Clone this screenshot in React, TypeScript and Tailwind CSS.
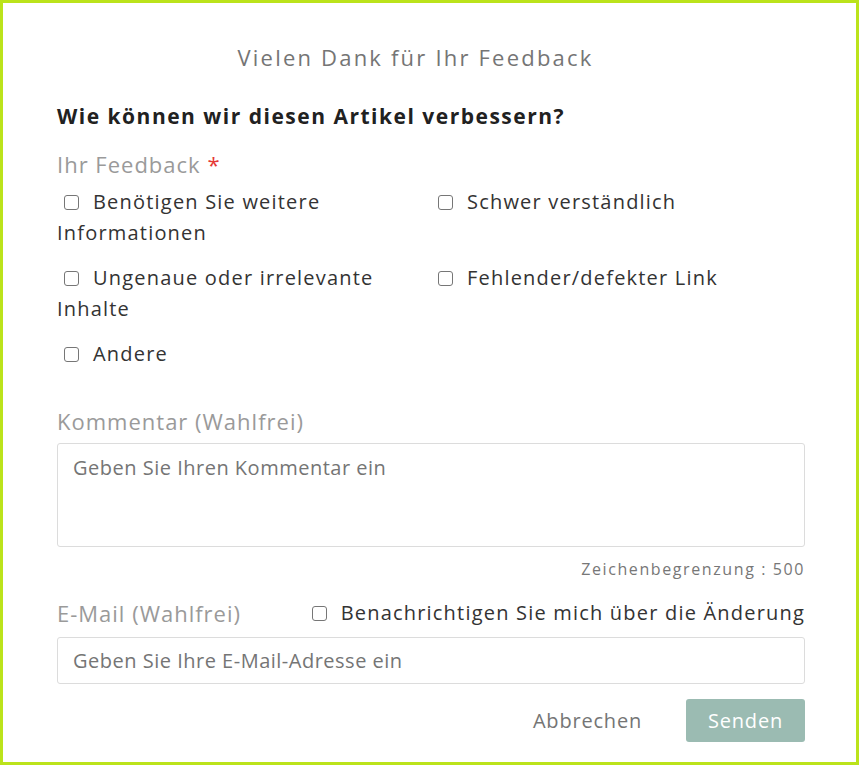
import React from "react";

function Box({ left = true }: { left?: boolean }) {
  return (
    <span
      className={
        "inline-block align-[-1px] w-[15px] h-[15px] rounded-[3px] border-[1.5px] border-[#767676] bg-white mr-[14px] " +
        (left ? "ml-[7px]" : "ml-0")
      }
    />
  );
}

function Check({ label }: { label: string }) {
  return (
    <label className="block text-[20px] leading-[31px] tracking-[1.2px] text-[#333]">
      <Box />
      {label}
    </label>
  );
}

export default function App() {
  return (
    <div
      className="w-[859px] h-[765px] border-[3px] border-[#bbe31b] bg-white pl-[54px] pr-[51px] box-border"
      style={{ fontFamily: '"Open Sans", "Liberation Sans", sans-serif' }}
    >
      <div className="pt-[38px] pr-[31px] text-center text-[22px] leading-[32px] tracking-[2.2px] text-[#757575]">
        Vielen Dank für Ihr Feedback
      </div>
      <div className="mt-[29px] text-[21px] leading-[28px] font-bold tracking-[1.5px] text-[#212121]">
        Wie können wir diesen Artikel verbessern?
      </div>
      <div className="mt-[19px] text-[22px] leading-[30px] tracking-[1px] text-[#9a9a9a]">
        Ihr Feedback <span className="text-[#e53935]">*</span>
      </div>
      <div className="mt-[7px] grid grid-cols-2 gap-y-[14px]">
        <Check label="Benötigen Sie weitere Informationen" />
        <Check label="Schwer verständlich" />
        <Check label="Ungenaue oder irrelevante Inhalte" />
        <Check label="Fehlender/defekter Link" />
        <Check label="Andere" />
      </div>
      <div className="mt-[37px] text-[22px] leading-[30px] tracking-[1px] text-[#9a9a9a]">
        Kommentar (Wahlfrei)
      </div>
      <div className="mt-[7px] h-[104px] rounded-[3px] border border-[#dcdcdc] px-[15px] pt-[9px] text-[20px] leading-[30px] tracking-[0.5px] text-[#757575]">
        Geben Sie Ihren Kommentar ein
      </div>
      <div className="mt-[11px] text-right text-[16px] leading-[22px] tracking-[1.6px] text-[#777]">
        Zeichenbegrenzung : 500
      </div>
      <div className="mt-[18px] flex items-center justify-between">
        <div className="text-[22px] leading-[30px] tracking-[1px] text-[#9a9a9a]">
          E-Mail (Wahlfrei)
        </div>
        <label className="text-[20px] leading-[30px] tracking-[1.2px] text-[#333]">
          <Box left={false} />
          Benachrichtigen Sie mich über die Änderung
        </label>
      </div>
      <div className="mt-[9px] h-[47px] rounded-[3px] border border-[#dcdcdc] px-[15px] flex items-center text-[20px] tracking-[0.5px] text-[#757575]">
        Geben Sie Ihre E-Mail-Adresse ein
      </div>
      <div className="mt-[15px] flex justify-end items-center gap-[44px]">
        <span className="text-[20px] tracking-[0.8px] text-[#757575]">Abbrechen</span>
        <span className="w-[119px] h-[43px] rounded-[3px] bg-[#9bbbb2] text-white text-[20px] flex items-center justify-center tracking-[0.8px]">
          Senden
        </span>
      </div>
    </div>
  );
}
